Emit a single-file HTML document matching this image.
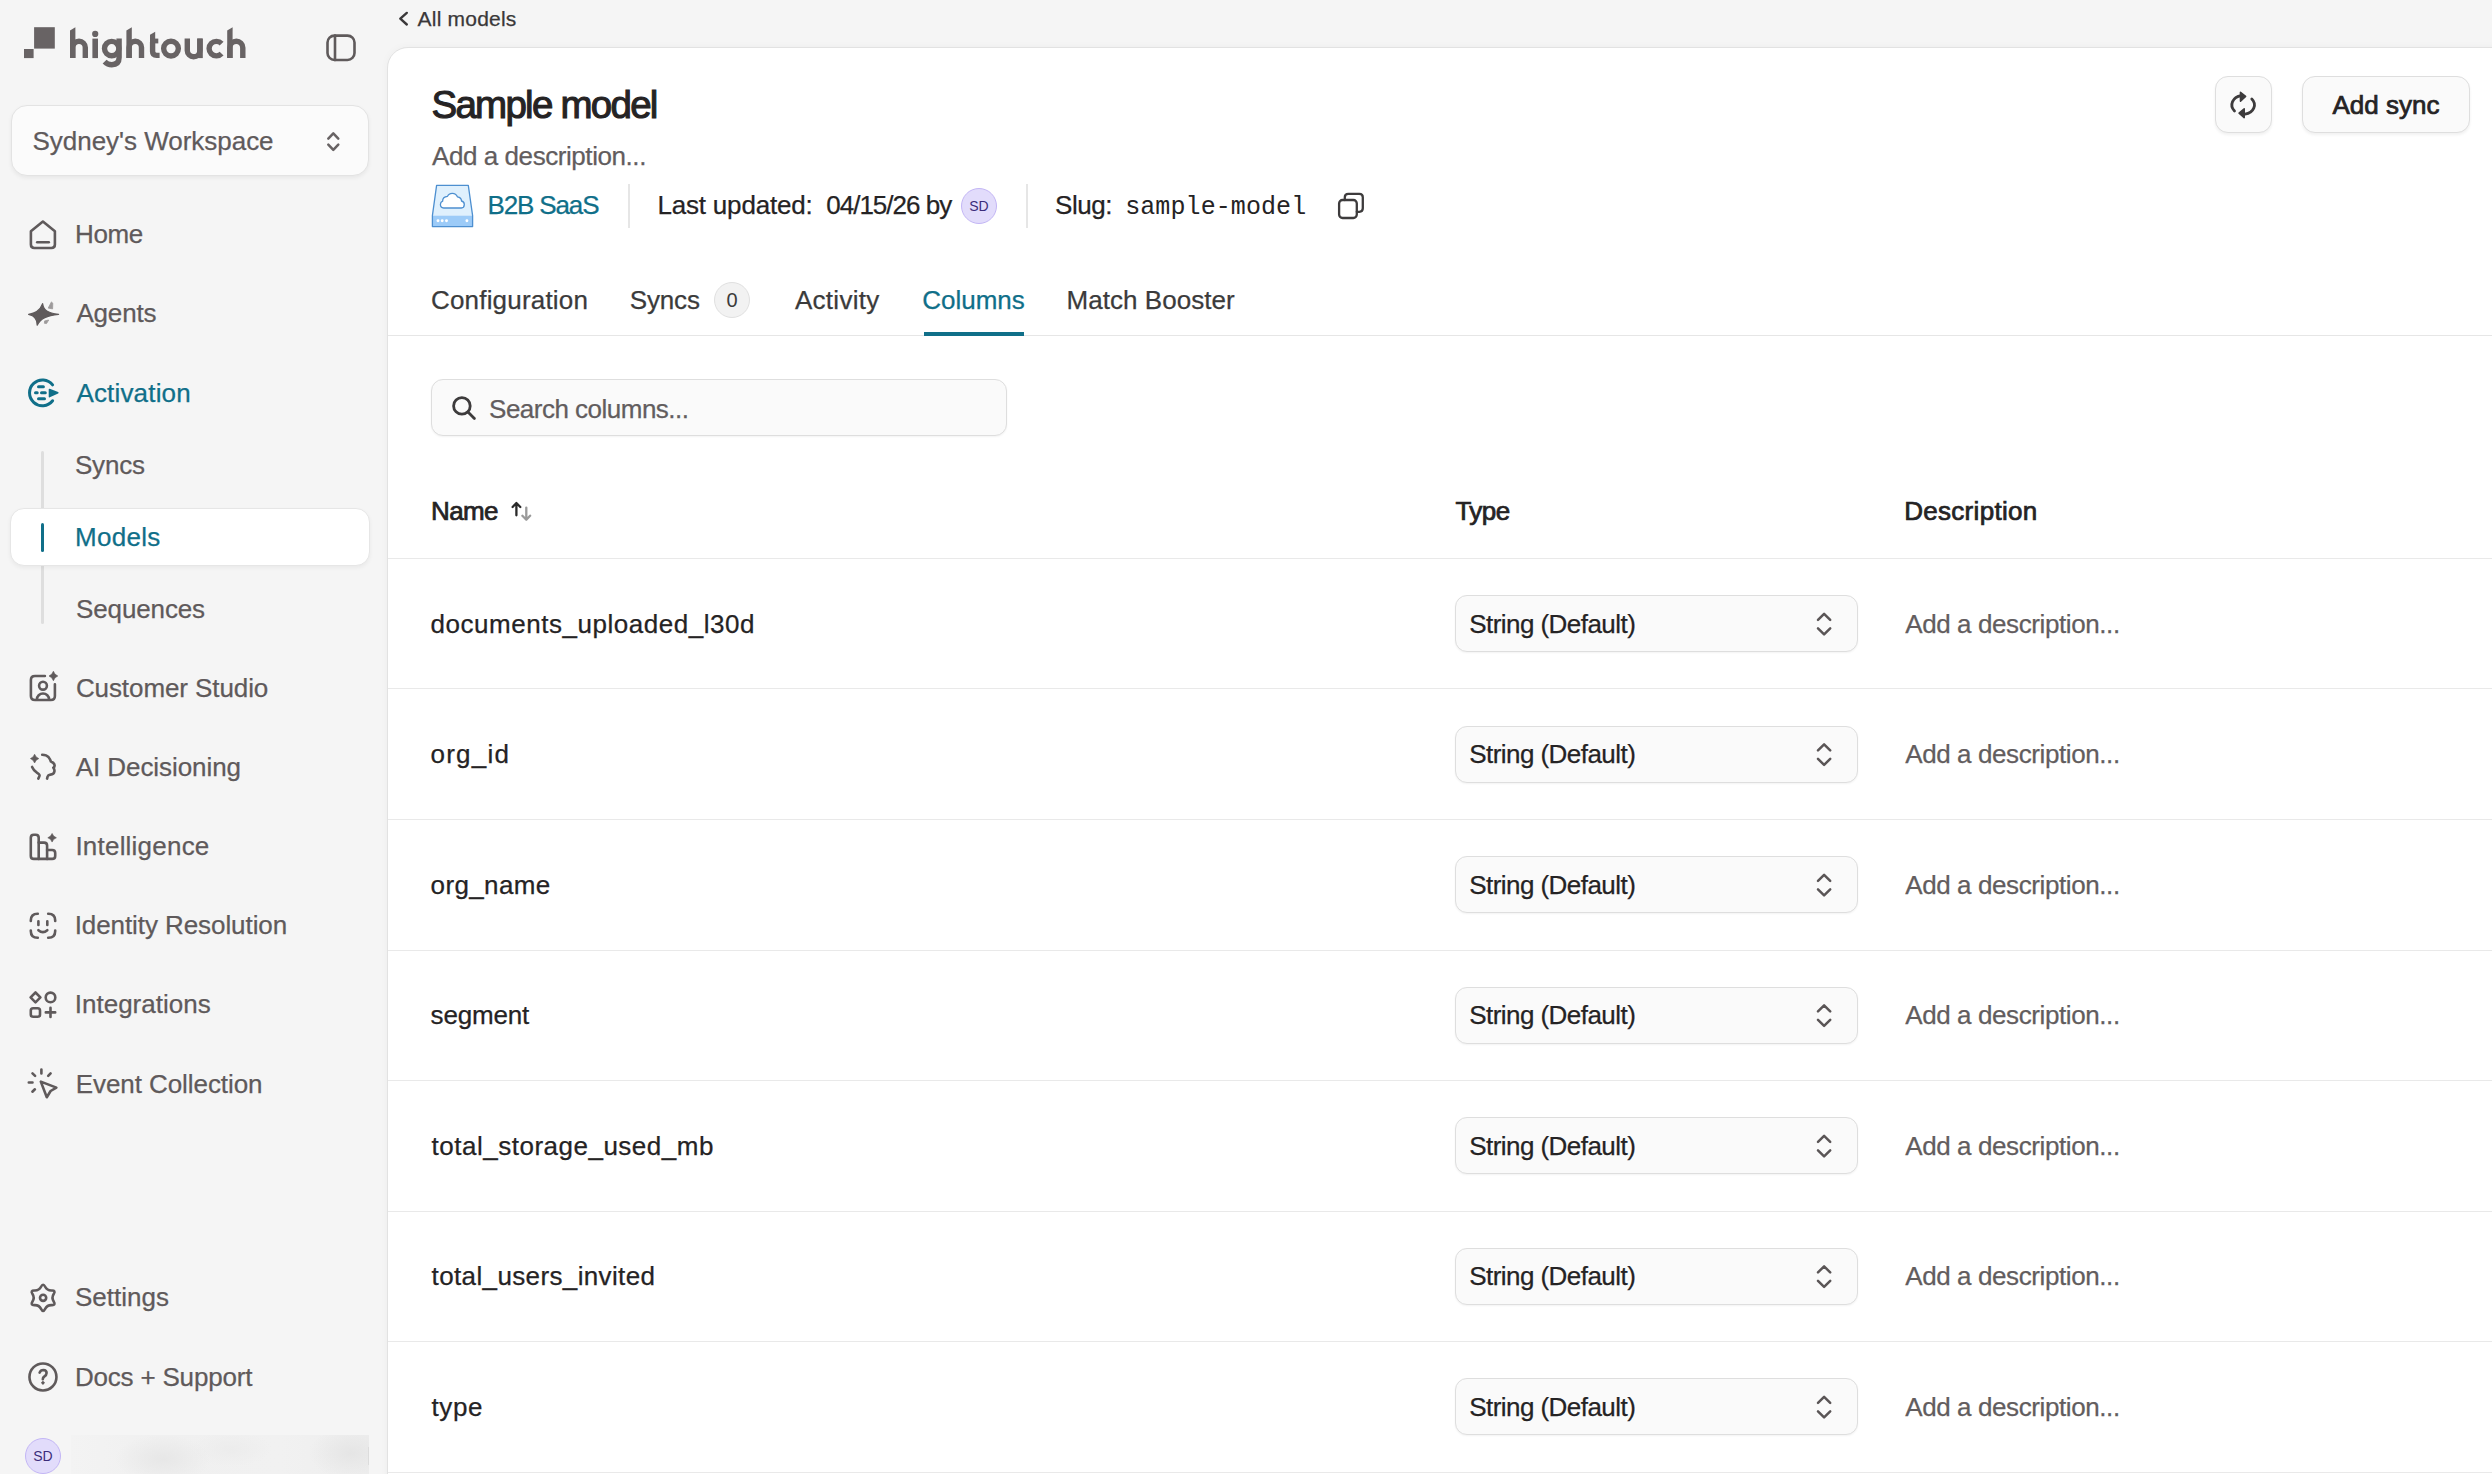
<!DOCTYPE html>
<html><head><meta charset="utf-8"><title>Sample model</title>
<style>
html,body{margin:0;padding:0;}
body{width:2492px;height:1474px;overflow:hidden;position:relative;background:#f5f5f5;font-family:"Liberation Sans",sans-serif;}
.t{position:absolute;white-space:nowrap;line-height:1;}
</style></head><body>
<div style="position:absolute;left:0;top:0;width:388px;height:1474px;background:#f5f5f5"></div>
<div style="position:absolute;left:11px;top:105px;width:358px;height:71px;background:#fbfbfb;border:1.5px solid #e3e3e3;border-radius:16px;box-sizing:border-box;box-shadow:0 2px 4px rgba(0,0,0,0.06)"></div>
<div class="t" id="ws" style="left:32.50px;top:128.19px;font-size:26px;color:#5f5a5b;font-weight:400;font-family:'Liberation Sans', sans-serif;letter-spacing:-0.024px;-webkit-text-stroke:0.25px #5f5a5b;">Sydney's Workspace</div>
<div style="position:absolute;left:41px;top:451px;width:3px;height:173px;background:#dedede;border-radius:2px"></div>
<div style="position:absolute;left:10px;top:508px;width:360px;height:58px;background:#fff;border:1.5px solid #e6e6e6;border-radius:14px;box-sizing:border-box;box-shadow:0 2px 4px rgba(0,0,0,0.05)"></div>
<div style="position:absolute;left:41px;top:523px;width:3px;height:29px;background:#106f89;border-radius:2px"></div>
<div class="t" id="n_home" style="left:75.10px;top:220.89px;font-size:26px;color:#5f5a5b;font-weight:400;font-family:'Liberation Sans', sans-serif;letter-spacing:-0.400px;-webkit-text-stroke:0.25px #5f5a5b;">Home</div>
<div class="t" id="n_agents" style="left:76.40px;top:299.69px;font-size:26px;color:#5f5a5b;font-weight:400;font-family:'Liberation Sans', sans-serif;letter-spacing:-0.160px;-webkit-text-stroke:0.25px #5f5a5b;">Agents</div>
<div class="t" id="n_act" style="left:76.40px;top:379.79px;font-size:26px;color:#106f89;font-weight:400;font-family:'Liberation Sans', sans-serif;letter-spacing:0.178px;-webkit-text-stroke:0.25px #106f89;">Activation</div>
<div class="t" id="n_syncs" style="left:74.90px;top:452.19px;font-size:26px;color:#5f5a5b;font-weight:400;font-family:'Liberation Sans', sans-serif;letter-spacing:-0.150px;-webkit-text-stroke:0.25px #5f5a5b;">Syncs</div>
<div class="t" id="n_models" style="left:75.00px;top:523.99px;font-size:26px;color:#106f89;font-weight:400;font-family:'Liberation Sans', sans-serif;letter-spacing:0.280px;-webkit-text-stroke:0.25px #106f89;">Models</div>
<div class="t" id="n_seq" style="left:76.00px;top:596.29px;font-size:26px;color:#5f5a5b;font-weight:400;font-family:'Liberation Sans', sans-serif;letter-spacing:-0.125px;-webkit-text-stroke:0.25px #5f5a5b;">Sequences</div>
<div class="t" id="n_cs" style="left:75.90px;top:675.29px;font-size:26px;color:#5f5a5b;font-weight:400;font-family:'Liberation Sans', sans-serif;letter-spacing:-0.086px;-webkit-text-stroke:0.25px #5f5a5b;">Customer Studio</div>
<div class="t" id="n_ai" style="left:75.80px;top:754.29px;font-size:26px;color:#5f5a5b;font-weight:400;font-family:'Liberation Sans', sans-serif;letter-spacing:-0.077px;-webkit-text-stroke:0.25px #5f5a5b;">AI Decisioning</div>
<div class="t" id="n_int" style="left:75.40px;top:833.29px;font-size:26px;color:#5f5a5b;font-weight:400;font-family:'Liberation Sans', sans-serif;letter-spacing:0.218px;-webkit-text-stroke:0.25px #5f5a5b;">Intelligence</div>
<div class="t" id="n_idr" style="left:74.70px;top:912.39px;font-size:26px;color:#5f5a5b;font-weight:400;font-family:'Liberation Sans', sans-serif;letter-spacing:-0.078px;-webkit-text-stroke:0.25px #5f5a5b;">Identity Resolution</div>
<div class="t" id="n_integ" style="left:74.70px;top:991.39px;font-size:26px;color:#5f5a5b;font-weight:400;font-family:'Liberation Sans', sans-serif;letter-spacing:0.018px;-webkit-text-stroke:0.25px #5f5a5b;">Integrations</div>
<div class="t" id="n_ev" style="left:75.70px;top:1071.09px;font-size:26px;color:#5f5a5b;font-weight:400;font-family:'Liberation Sans', sans-serif;letter-spacing:-0.067px;-webkit-text-stroke:0.25px #5f5a5b;">Event Collection</div>
<div class="t" id="n_set" style="left:74.90px;top:1284.19px;font-size:26px;color:#5f5a5b;font-weight:400;font-family:'Liberation Sans', sans-serif;letter-spacing:0.029px;-webkit-text-stroke:0.25px #5f5a5b;">Settings</div>
<div class="t" id="n_docs" style="left:74.90px;top:1364.39px;font-size:26px;color:#5f5a5b;font-weight:400;font-family:'Liberation Sans', sans-serif;letter-spacing:-0.185px;-webkit-text-stroke:0.25px #5f5a5b;">Docs + Support</div>
<div style="position:absolute;left:25px;top:1438px;width:36px;height:36px;border-radius:50%;background:#e2dcfb;border:1px solid #c3b6f5;box-sizing:border-box"></div>
<div style="position:absolute;left:25px;top:1438px;width:36px;height:36px;line-height:37px;text-align:center;font-size:14px;color:#3b2d7a">SD</div>
<div style="position:absolute;left:71px;top:1435px;width:298px;height:39px;background:radial-gradient(ellipse 48px 24px at 92px 24px,#e7e7e7,rgba(234,234,234,0) 100%),radial-gradient(ellipse 40px 18px at 160px 14px,#ececec,rgba(236,236,236,0) 100%),radial-gradient(ellipse 42px 26px at 280px 18px,#e5e5e5,rgba(229,229,229,0) 100%),linear-gradient(90deg,#f3f3f3,#f0f0f0 30%,#f1f1f1 70%,#eeeeee)"></div>
<div style="position:absolute;left:368px;top:1447px;width:1px;height:18px;background:#dcdcdc"></div>
<div class="t" id="bc" style="left:417.60px;top:8.32px;font-size:21px;color:#3a3839;font-weight:400;font-family:'Liberation Sans', sans-serif;letter-spacing:0.200px;-webkit-text-stroke:0.25px #3a3839;">All models</div>
<div style="position:absolute;left:387px;top:47px;width:2200px;height:1500px;background:#fff;border:1px solid #e2e2e2;border-radius:21px 0 0 0;box-sizing:border-box;box-shadow:0 0 8px rgba(0,0,0,0.035)"></div>
<div class="t" id="title" style="left:431.50px;top:85.50px;font-size:38.5px;color:#252324;font-weight:400;font-family:'Liberation Sans', sans-serif;letter-spacing:-1.745px;-webkit-text-stroke:1.08px #252324;">Sample model</div>
<div class="t" id="desc" style="left:432.00px;top:142.99px;font-size:26px;color:#625d5e;font-weight:400;font-family:'Liberation Sans', sans-serif;letter-spacing:-0.432px;-webkit-text-stroke:0.25px #625d5e;">Add a description...</div>
<div class="t" id="b2b" style="left:487.50px;top:192.49px;font-size:26px;color:#106f89;font-weight:400;font-family:'Liberation Sans', sans-serif;letter-spacing:-1.143px;-webkit-text-stroke:0.25px #106f89;">B2B SaaS</div>
<div style="position:absolute;left:628px;top:184px;width:1.5px;height:44px;background:#e6e6e6"></div>
<div class="t" id="lu" style="left:657.40px;top:192.49px;font-size:26px;color:#252324;font-weight:400;font-family:'Liberation Sans', sans-serif;letter-spacing:-0.183px;-webkit-text-stroke:0.25px #252324;">Last updated:</div>
<div class="t" id="date" style="left:826.20px;top:192.49px;font-size:26px;color:#252324;font-weight:400;font-family:'Liberation Sans', sans-serif;letter-spacing:-0.980px;-webkit-text-stroke:0.25px #252324;">04/15/26 by</div>
<div style="position:absolute;left:961px;top:188px;width:36px;height:36px;border-radius:50%;background:#e2dcfb;border:1px solid #c3b6f5;box-sizing:border-box"></div>
<div style="position:absolute;left:961px;top:188px;width:36px;height:36px;line-height:37px;text-align:center;font-size:14px;color:#3b2d7a">SD</div>
<div style="position:absolute;left:1026px;top:184px;width:1.5px;height:44px;background:#e6e6e6"></div>
<div class="t" id="slug" style="left:1055.10px;top:192.49px;font-size:26px;color:#252324;font-weight:400;font-family:'Liberation Sans', sans-serif;letter-spacing:-0.450px;-webkit-text-stroke:0.25px #252324;">Slug:</div>
<div class="t" id="slugv" style="left:1125.20px;top:195.05px;font-size:25px;color:#252324;font-weight:400;font-family:'Liberation Mono', monospace;letter-spacing:0.091px;">sample-model</div>
<div style="position:absolute;left:2215px;top:76px;width:57px;height:57px;background:#fafafa;border:1.5px solid #dedede;border-radius:13px;box-sizing:border-box;box-shadow:0 2px 3px rgba(0,0,0,0.06)"></div>
<div style="position:absolute;left:2302px;top:76px;width:168px;height:57px;background:#fafafa;border:1.5px solid #dedede;border-radius:13px;box-sizing:border-box;box-shadow:0 2px 3px rgba(0,0,0,0.06)"></div>
<div class="t" id="addsync" style="left:2332.40px;top:92.09px;font-size:26px;color:#252324;font-weight:400;font-family:'Liberation Sans', sans-serif;letter-spacing:0.029px;-webkit-text-stroke:0.73px #252324;">Add sync</div>
<div class="t" id="tab_conf" style="left:431.00px;top:286.79px;font-size:26px;color:#3b3b3b;font-weight:400;font-family:'Liberation Sans', sans-serif;letter-spacing:0.183px;-webkit-text-stroke:0.25px #3b3b3b;">Configuration</div>
<div class="t" id="tab_syncs" style="left:629.70px;top:286.79px;font-size:26px;color:#3b3b3b;font-weight:400;font-family:'Liberation Sans', sans-serif;letter-spacing:-0.150px;-webkit-text-stroke:0.25px #3b3b3b;">Syncs</div>
<div style="position:absolute;left:714px;top:282px;width:36px;height:36px;border-radius:50%;background:#f2f2f2;border:1px solid #e0e0e0;box-sizing:border-box"></div>
<div style="position:absolute;left:714px;top:282px;width:36px;height:36px;line-height:36px;text-align:center;font-size:20px;color:#3b3b3b">0</div>
<div class="t" id="tab_act" style="left:794.90px;top:286.79px;font-size:26px;color:#3b3b3b;font-weight:400;font-family:'Liberation Sans', sans-serif;letter-spacing:0.286px;-webkit-text-stroke:0.25px #3b3b3b;">Activity</div>
<div class="t" id="tab_col" style="left:922.20px;top:286.79px;font-size:26px;color:#106f89;font-weight:400;font-family:'Liberation Sans', sans-serif;letter-spacing:-0.000px;-webkit-text-stroke:0.25px #106f89;">Columns</div>
<div class="t" id="tab_mb" style="left:1066.60px;top:286.79px;font-size:26px;color:#3b3b3b;font-weight:400;font-family:'Liberation Sans', sans-serif;letter-spacing:0.033px;-webkit-text-stroke:0.25px #3b3b3b;">Match Booster</div>
<div style="position:absolute;left:388px;top:335px;width:2104px;height:1px;background:#e6e6e6"></div>
<div style="position:absolute;left:923.6px;top:332px;width:100.5px;height:4px;background:#106f89"></div>
<div style="position:absolute;left:431px;top:379px;width:576px;height:57px;background:#fafafa;border:1.5px solid #dedede;border-radius:12px;box-sizing:border-box;box-shadow:0 1px 2px rgba(0,0,0,0.05)"></div>
<div class="t" id="search" style="left:489.10px;top:395.79px;font-size:26px;color:#625d5e;font-weight:400;font-family:'Liberation Sans', sans-serif;letter-spacing:-0.512px;-webkit-text-stroke:0.25px #625d5e;">Search columns...</div>
<div class="t" id="h_name" style="left:431.10px;top:497.79px;font-size:26px;color:#252324;font-weight:400;font-family:'Liberation Sans', sans-serif;letter-spacing:-0.667px;-webkit-text-stroke:0.73px #252324;">Name</div>
<div class="t" id="h_type" style="left:1455.40px;top:498.49px;font-size:26px;color:#252324;font-weight:400;font-family:'Liberation Sans', sans-serif;letter-spacing:-0.533px;-webkit-text-stroke:0.73px #252324;">Type</div>
<div class="t" id="h_desc" style="left:1904.20px;top:498.49px;font-size:26px;color:#252324;font-weight:400;font-family:'Liberation Sans', sans-serif;letter-spacing:0.300px;-webkit-text-stroke:0.73px #252324;">Description</div>
<div style="position:absolute;left:388px;top:558px;width:2104px;height:1px;background:#e9e9e9"></div>
<div class="t" id="r0_name" style="left:430.60px;top:610.89px;font-size:26px;color:#252324;font-weight:400;font-family:'Liberation Sans', sans-serif;letter-spacing:0.527px;-webkit-text-stroke:0.25px #252324;">documents_uploaded_l30d</div>
<div style="position:absolute;left:1454.6px;top:595.40px;width:403px;height:57px;background:#fafafa;border:1.5px solid #dedede;border-radius:12px;box-sizing:border-box;box-shadow:0 1px 2px rgba(0,0,0,0.05)"></div>
<div class="t" id="r0_type" style="left:1469.20px;top:610.89px;font-size:26px;color:#252324;font-weight:400;font-family:'Liberation Sans', sans-serif;letter-spacing:-0.547px;-webkit-text-stroke:0.25px #252324;">String (Default)</div>
<div class="t" id="r0_desc" style="left:1905.20px;top:610.89px;font-size:26px;color:#625d5e;font-weight:400;font-family:'Liberation Sans', sans-serif;letter-spacing:-0.400px;-webkit-text-stroke:0.25px #625d5e;">Add a description...</div>
<div style="position:absolute;left:388px;top:688px;width:2104px;height:1px;background:#e9e9e9"></div>
<div class="t" id="r1_name" style="left:430.60px;top:741.39px;font-size:26px;color:#252324;font-weight:400;font-family:'Liberation Sans', sans-serif;letter-spacing:1.200px;-webkit-text-stroke:0.25px #252324;">org_id</div>
<div style="position:absolute;left:1454.6px;top:725.90px;width:403px;height:57px;background:#fafafa;border:1.5px solid #dedede;border-radius:12px;box-sizing:border-box;box-shadow:0 1px 2px rgba(0,0,0,0.05)"></div>
<div class="t" id="r1_type" style="left:1469.20px;top:741.39px;font-size:26px;color:#252324;font-weight:400;font-family:'Liberation Sans', sans-serif;letter-spacing:-0.547px;-webkit-text-stroke:0.25px #252324;">String (Default)</div>
<div class="t" id="r1_desc" style="left:1905.20px;top:741.39px;font-size:26px;color:#625d5e;font-weight:400;font-family:'Liberation Sans', sans-serif;letter-spacing:-0.400px;-webkit-text-stroke:0.25px #625d5e;">Add a description...</div>
<div style="position:absolute;left:388px;top:819px;width:2104px;height:1px;background:#e9e9e9"></div>
<div class="t" id="r2_name" style="left:430.60px;top:871.89px;font-size:26px;color:#252324;font-weight:400;font-family:'Liberation Sans', sans-serif;letter-spacing:0.371px;-webkit-text-stroke:0.25px #252324;">org_name</div>
<div style="position:absolute;left:1454.6px;top:856.40px;width:403px;height:57px;background:#fafafa;border:1.5px solid #dedede;border-radius:12px;box-sizing:border-box;box-shadow:0 1px 2px rgba(0,0,0,0.05)"></div>
<div class="t" id="r2_type" style="left:1469.20px;top:871.89px;font-size:26px;color:#252324;font-weight:400;font-family:'Liberation Sans', sans-serif;letter-spacing:-0.547px;-webkit-text-stroke:0.25px #252324;">String (Default)</div>
<div class="t" id="r2_desc" style="left:1905.20px;top:871.89px;font-size:26px;color:#625d5e;font-weight:400;font-family:'Liberation Sans', sans-serif;letter-spacing:-0.400px;-webkit-text-stroke:0.25px #625d5e;">Add a description...</div>
<div style="position:absolute;left:388px;top:950px;width:2104px;height:1px;background:#e9e9e9"></div>
<div class="t" id="r3_name" style="left:430.60px;top:1002.39px;font-size:26px;color:#252324;font-weight:400;font-family:'Liberation Sans', sans-serif;letter-spacing:-0.167px;-webkit-text-stroke:0.25px #252324;">segment</div>
<div style="position:absolute;left:1454.6px;top:986.90px;width:403px;height:57px;background:#fafafa;border:1.5px solid #dedede;border-radius:12px;box-sizing:border-box;box-shadow:0 1px 2px rgba(0,0,0,0.05)"></div>
<div class="t" id="r3_type" style="left:1469.20px;top:1002.39px;font-size:26px;color:#252324;font-weight:400;font-family:'Liberation Sans', sans-serif;letter-spacing:-0.547px;-webkit-text-stroke:0.25px #252324;">String (Default)</div>
<div class="t" id="r3_desc" style="left:1905.20px;top:1002.39px;font-size:26px;color:#625d5e;font-weight:400;font-family:'Liberation Sans', sans-serif;letter-spacing:-0.400px;-webkit-text-stroke:0.25px #625d5e;">Add a description...</div>
<div style="position:absolute;left:388px;top:1080px;width:2104px;height:1px;background:#e9e9e9"></div>
<div class="t" id="r4_name" style="left:431.60px;top:1132.89px;font-size:26px;color:#252324;font-weight:400;font-family:'Liberation Sans', sans-serif;letter-spacing:0.500px;-webkit-text-stroke:0.25px #252324;">total_storage_used_mb</div>
<div style="position:absolute;left:1454.6px;top:1117.40px;width:403px;height:57px;background:#fafafa;border:1.5px solid #dedede;border-radius:12px;box-sizing:border-box;box-shadow:0 1px 2px rgba(0,0,0,0.05)"></div>
<div class="t" id="r4_type" style="left:1469.20px;top:1132.89px;font-size:26px;color:#252324;font-weight:400;font-family:'Liberation Sans', sans-serif;letter-spacing:-0.547px;-webkit-text-stroke:0.25px #252324;">String (Default)</div>
<div class="t" id="r4_desc" style="left:1905.20px;top:1132.89px;font-size:26px;color:#625d5e;font-weight:400;font-family:'Liberation Sans', sans-serif;letter-spacing:-0.400px;-webkit-text-stroke:0.25px #625d5e;">Add a description...</div>
<div style="position:absolute;left:388px;top:1211px;width:2104px;height:1px;background:#e9e9e9"></div>
<div class="t" id="r5_name" style="left:431.60px;top:1263.39px;font-size:26px;color:#252324;font-weight:400;font-family:'Liberation Sans', sans-serif;letter-spacing:0.367px;-webkit-text-stroke:0.25px #252324;">total_users_invited</div>
<div style="position:absolute;left:1454.6px;top:1247.90px;width:403px;height:57px;background:#fafafa;border:1.5px solid #dedede;border-radius:12px;box-sizing:border-box;box-shadow:0 1px 2px rgba(0,0,0,0.05)"></div>
<div class="t" id="r5_type" style="left:1469.20px;top:1263.39px;font-size:26px;color:#252324;font-weight:400;font-family:'Liberation Sans', sans-serif;letter-spacing:-0.547px;-webkit-text-stroke:0.25px #252324;">String (Default)</div>
<div class="t" id="r5_desc" style="left:1905.20px;top:1263.39px;font-size:26px;color:#625d5e;font-weight:400;font-family:'Liberation Sans', sans-serif;letter-spacing:-0.400px;-webkit-text-stroke:0.25px #625d5e;">Add a description...</div>
<div style="position:absolute;left:388px;top:1341px;width:2104px;height:1px;background:#e9e9e9"></div>
<div class="t" id="r6_name" style="left:431.60px;top:1393.89px;font-size:26px;color:#252324;font-weight:400;font-family:'Liberation Sans', sans-serif;letter-spacing:0.533px;-webkit-text-stroke:0.25px #252324;">type</div>
<div style="position:absolute;left:1454.6px;top:1378.40px;width:403px;height:57px;background:#fafafa;border:1.5px solid #dedede;border-radius:12px;box-sizing:border-box;box-shadow:0 1px 2px rgba(0,0,0,0.05)"></div>
<div class="t" id="r6_type" style="left:1469.20px;top:1393.89px;font-size:26px;color:#252324;font-weight:400;font-family:'Liberation Sans', sans-serif;letter-spacing:-0.547px;-webkit-text-stroke:0.25px #252324;">String (Default)</div>
<div class="t" id="r6_desc" style="left:1905.20px;top:1393.89px;font-size:26px;color:#625d5e;font-weight:400;font-family:'Liberation Sans', sans-serif;letter-spacing:-0.400px;-webkit-text-stroke:0.25px #625d5e;">Add a description...</div>
<div style="position:absolute;left:388px;top:1472px;width:2104px;height:1px;background:#e9e9e9"></div>
<svg style="position:absolute;left:0;top:0;z-index:5" width="2492" height="1474" viewBox="0 0 2492 1474"><rect x="24" y="49" width="9.6" height="9.1" fill="#686364"/><rect x="34.1" y="27.2" width="20.7" height="21.4" fill="#686364"/><path d="M70 30.4 L75.4 27.3 L75.4 58.1 L70 58.1 Z" fill="#686364"/><path d="M72.70 58.1 L72.70 47.60 A6.30 6.30 0 0 1 85.30 47.60 L85.30 58.1" fill="none" stroke="#686364" stroke-width="5.4"/><rect x="92.4" y="38.6" width="5.6" height="19.5" fill="#686364"/><circle cx="95.2" cy="33.9" r="3.1" fill="#686364"/><circle cx="111.7" cy="48.6" r="7.2" fill="none" stroke="#686364" stroke-width="5.4" stroke-width="5.2"/><path d="M119.1 38.6 L119.1 57.6 Q119.1 64.7 111.8 64.7 Q107.6 64.7 104.6 61.6" fill="none" stroke="#686364" stroke-width="5.4" stroke-width="5.4"/><path d="M126.4 30.4 L131.8 27.3 L131.8 58.1 L126.4 58.1 Z" fill="#686364"/><path d="M129.10 58.1 L129.10 47.50 A6.20 6.20 0 0 1 141.50 47.50 L141.50 58.1" fill="none" stroke="#686364" stroke-width="5.4"/><path d="M150 34.7 L155.2 31.8 L155.2 43 L150 43 Z" fill="#686364"/><rect x="150" y="38.6" width="8.3" height="4.8" fill="#686364"/><path d="M152.6 42 L152.6 51.6 Q152.6 55.4 156.6 55.4 L159.6 55.4" fill="none" stroke="#686364" stroke-width="5.4" stroke-width="5.4"/><circle cx="171" cy="48.6" r="7.35" fill="none" stroke="#686364" stroke-width="5.4" stroke-width="5.3"/><path d="M187.3 38.6 L187.3 50.5 A6.25 6.25 0 0 0 199.9 50.5 L199.9 38.6" fill="none" stroke="#686364" stroke-width="5.4"/><rect x="197.2" y="38.6" width="5.6" height="19.5" fill="#686364"/><path d="M221.6 43.6 A7.25 7.25 0 1 0 221.6 53.6" fill="none" stroke="#686364" stroke-width="5.4" stroke-width="5.3"/><path d="M227.2 30.4 L232.6 27.3 L232.6 58.1 L227.2 58.1 Z" fill="#686364"/><path d="M229.90 58.1 L229.90 47.75 A6.45 6.45 0 0 1 242.80 47.75 L242.80 58.1" fill="none" stroke="#686364" stroke-width="5.4"/><rect x="327.5" y="35.6" width="27" height="24.4" rx="7" fill="none" stroke="#5f5a5b" stroke-width="2.6" stroke-linecap="round" stroke-linejoin="round" stroke-width="2.7"/><path d="M335 35.6 L335 60" fill="none" stroke="#5f5a5b" stroke-width="2.6" stroke-linecap="round" stroke-linejoin="round" stroke-width="2.7"/><path d="M328.3 138.6 L333.3 133.29999999999998 L338.3 138.6 M328.3 144.6 L333.3 149.9 L338.3 144.6" fill="none" stroke="#686364" stroke-width="2.5" stroke-linecap="round" stroke-linejoin="round"/><path d="M30.9 231.2 L42.9 221.6 L54.9 231.2 L54.9 244.6 Q54.9 248 51.5 248 L34.3 248 Q30.9 248 30.9 244.6 Z" fill="none" stroke="#5f5a5b" stroke-width="2.6" stroke-linecap="round" stroke-linejoin="round"/><path d="M37.2 242.3 L48.8 242.3" fill="none" stroke="#5f5a5b" stroke-width="2.6" stroke-linecap="round" stroke-linejoin="round"/><path d="M28.6 314.4 C34.5 313.4 39.6 311.6 42.6 303.6 C43.6 310.4 47.4 313 58.6 314.4 C47 315.6 40.6 318.2 37.2 325.2 C37.4 318.4 34.5 315.6 28.6 314.4 Z" fill="#5f5a5b" stroke="#5f5a5b" stroke-width="1.2" stroke-linejoin="round"/><path d="M51.4 301.9 L52.8 303.2 L52.6 308.9 L48.2 308.1 Z" fill="#9d9a9b" stroke="#9d9a9b" stroke-width="0.8" stroke-linejoin="round"/><path d="M48.7 320 L46.5 323.6 L44.4 323.3 L44.6 320.9 Z" fill="#9d9a9b" stroke="#9d9a9b" stroke-width="0.8" stroke-linejoin="round"/><path d="M52.6 384.86 A12.9 12.9 0 1 0 52.6 400.74" fill="none" stroke="#106f89" stroke-width="3" stroke-linecap="round" stroke-linejoin="round" stroke-width="3.1"/><path d="M38.5 386.8 L43.4 386.8 M35.5 392.8 L37.2 392.8 M41.5 392.8 L45.3 392.8 M38.5 398.8 L44.5 398.8" fill="none" stroke="#106f89" stroke-width="3" stroke-linecap="round" stroke-linejoin="round" stroke-width="2.4"/><path d="M49.5 389.6 L57.8 392.8 L49.5 396.6 Z" fill="#106f89" stroke="#106f89" stroke-width="1.6" stroke-linejoin="round"/><path d="M44.9 676 L35 676 Q30.9 676 30.9 680 L30.9 696 Q30.9 700 35 700 L50.9 700 Q54.9 700 54.9 696 L54.9 684.3" fill="none" stroke="#5f5a5b" stroke-width="2.6" stroke-linecap="round" stroke-linejoin="round"/><circle cx="43" cy="685.7" r="3.9" fill="none" stroke="#5f5a5b" stroke-width="2.6" stroke-linecap="round" stroke-linejoin="round"/><path d="M36.9 699.6 A6.1 6.1 0 0 1 49.1 699.6" fill="none" stroke="#5f5a5b" stroke-width="2.6" stroke-linecap="round" stroke-linejoin="round"/><path d="M53.4 671.2 Q54.5 674.8 57.8 676 Q54.5 677.2 53.4 680.8 Q52.3 677.2 49.0 676 Q52.3 674.8 53.4 671.2 Z" fill="#5f5a5b" stroke="#5f5a5b" stroke-width="0.6" stroke-linejoin="round"/><path d="M42.2 754.7 Q46.5 754.8 48.6 757.2 Q50.4 759.4 50.9 761.6 Q54.4 762.8 54.6 765.4 Q54.7 767 53.3 767.6 Q54.8 769.5 54.4 771.5 Q53.9 774.4 50.5 774.6 Q48 775 47.6 776.5 L47.1 778.6" fill="none" stroke="#5f5a5b" stroke-width="2.6" stroke-linecap="round" stroke-linejoin="round"/><path d="M32.1 766.9 Q33.6 770.6 37.2 772.8 Q40.2 774.5 39.4 776.3 L38.3 778.6" fill="none" stroke="#5f5a5b" stroke-width="2.6" stroke-linecap="round" stroke-linejoin="round"/><path d="M34.6 754.2 Q35.65 757.5 38.800000000000004 758.6 Q35.65 759.7 34.6 763.0 Q33.550000000000004 759.7 30.400000000000002 758.6 Q33.550000000000004 757.5 34.6 754.2 Z" fill="#5f5a5b" stroke="#5f5a5b" stroke-width="0.6" stroke-linejoin="round"/><path d="M30.8 855.9 L30.8 837.8 Q30.8 834.8 33.8 834.8 L35.7 834.8 Q38.7 834.8 38.7 837.8 L38.7 858.9 L33.8 858.9 Q30.8 858.9 30.8 855.9 Z" fill="none" stroke="#5f5a5b" stroke-width="2.6" stroke-linecap="round" stroke-linejoin="round"/><path d="M38.7 842.6 L44.1 842.6 Q47.1 842.6 47.1 845.6 L47.1 858.9 L38.7 858.9" fill="none" stroke="#5f5a5b" stroke-width="2.6" stroke-linecap="round" stroke-linejoin="round"/><path d="M47.1 850 L52.2 850 Q55.2 850 55.2 853 L55.2 855.9 Q55.2 858.9 52.2 858.9 L47.1 858.9" fill="none" stroke="#5f5a5b" stroke-width="2.6" stroke-linecap="round" stroke-linejoin="round"/><path d="M52.1 833.45 Q53.175000000000004 836.675 56.4 837.75 Q53.175000000000004 838.825 52.1 842.05 Q51.025 838.825 47.800000000000004 837.75 Q51.025 836.675 52.1 833.45 Z" fill="#5f5a5b" stroke="#5f5a5b" stroke-width="0.6" stroke-linejoin="round"/><path d="M30.8 921 L30.8 920.5 Q30.8 913.7 37.6 913.7 L37.8 913.7 M48.2 913.7 L48.4 913.7 Q55.2 913.7 55.2 920.5 L55.2 921 M55.2 930.5 L55.2 931 Q55.2 937.8 48.4 937.8 L48.2 937.8 M37.8 937.8 L37.6 937.8 Q30.8 937.8 30.8 931 L30.8 930.5" fill="none" stroke="#5f5a5b" stroke-width="2.6" stroke-linecap="round" stroke-linejoin="round"/><path d="M38.4 921.2 L38.4 924.9 M47.3 921.2 L47.3 924.9 M38.4 930.2 Q42.9 934 47.3 930.2" fill="none" stroke="#5f5a5b" stroke-width="2.6" stroke-linecap="round" stroke-linejoin="round"/><path d="M35.5 992.5 L40.4 997.4 L35.5 1002.3 L30.6 997.4 Z" fill="none" stroke="#5f5a5b" stroke-width="2.6" stroke-linecap="round" stroke-linejoin="round"/><circle cx="50.5" cy="997.4" r="4.8" fill="none" stroke="#5f5a5b" stroke-width="2.6" stroke-linecap="round" stroke-linejoin="round"/><rect x="30.8" y="1008.2" width="9.2" height="8.6" rx="2.3" fill="none" stroke="#5f5a5b" stroke-width="2.6" stroke-linecap="round" stroke-linejoin="round"/><path d="M50.5 1007.8 L50.5 1017 M45.8 1012.4 L55.2 1012.4" fill="none" stroke="#5f5a5b" stroke-width="2.6" stroke-linecap="round" stroke-linejoin="round"/><path d="M40.8 1081.6 L56.4 1087.6 L50.6 1091 L46.8 1097.2 Z" fill="none" stroke="#5f5a5b" stroke-width="2.6" stroke-linecap="round" stroke-linejoin="round" stroke-width="2.8"/><path d="M41.4 1069.6 L41.4 1073.4 M32.5 1073.4 L35.1 1075.9 M48.2 1075.9 L50.6 1073.4 M28.8 1082.5 L32.5 1082.5 M32.4 1091.7 L34.9 1089.3" fill="none" stroke="#5f5a5b" stroke-width="2.6" stroke-linecap="round" stroke-linejoin="round"/><path d="M41.05 1286.75 Q43.10 1282.80 45.15 1286.75 Q47.20 1290.70 51.65 1290.50 Q56.09 1290.30 53.70 1294.05 Q51.30 1297.80 53.70 1301.55 Q56.09 1305.30 51.65 1305.10 Q47.20 1304.90 45.15 1308.85 Q43.10 1312.80 41.05 1308.85 Q39.00 1304.90 34.55 1305.10 Q30.11 1305.30 32.50 1301.55 Q34.90 1297.80 32.50 1294.05 Q30.11 1290.30 34.55 1290.50 Q39.00 1290.70 41.05 1286.75 Z" fill="none" stroke="#5f5a5b" stroke-width="2.6" stroke-linecap="round" stroke-linejoin="round" stroke-width="2.7"/><circle cx="43.1" cy="1297.8" r="3.1" fill="none" stroke="#5f5a5b" stroke-width="2.6" stroke-linecap="round" stroke-linejoin="round" stroke-width="2.6"/><circle cx="42.95" cy="1376.95" r="13.5" fill="none" stroke="#5f5a5b" stroke-width="2.6" stroke-linecap="round" stroke-linejoin="round" stroke-width="2.8"/><path d="M39.6 1372.6 Q40.6 1370 43.4 1370 Q46.6 1370.2 46.6 1373 Q46.6 1375 44.2 1376.6 Q42.8 1377.6 42.8 1379.2" fill="none" stroke="#5f5a5b" stroke-width="2.6" stroke-linecap="round" stroke-linejoin="round" stroke-width="2.7"/><rect x="41.5" y="1381.4" width="2.9" height="2.9" fill="#5f5a5b" transform="rotate(45 42.95 1382.85)"/><path d="M406.8 12.9 L400.3 18.7 L406.8 24.5" fill="none" stroke="#3a3839" stroke-width="2.4" stroke-linecap="round" stroke-linejoin="round"/><path d="M436.6 185.3 L468.3 185.3 L472.6 215.6 L432.4 215.6 Z" fill="#dff0fd"/><rect x="432.4" y="215.6" width="40.2" height="11" fill="#9ccbf8"/><path d="M436.6 185.3 L468.3 185.3 L472.6 215.6 L472.6 226.6 L432.4 226.6 L432.4 215.6 Z" fill="none" stroke="#4d8fd0" stroke-width="1.3" stroke-linejoin="round"/><path d="M443.6 208 L461.3 208 Q464.3 207.8 464.3 204.5 Q464.3 201.6 461.5 201 Q461.5 197.5 457.4 196.8 Q456 193.3 452.3 193.3 Q448.6 193.3 447.5 196.4 Q442.6 196.8 442.6 201.2 Q440.4 202 440.4 204.6 Q440.5 208 443.6 208 Z" fill="#fff" stroke="#4d8fd0" stroke-width="1.3" stroke-linejoin="round"/><circle cx="438.0" cy="220.7" r="1.45" fill="#fff"/><circle cx="442.2" cy="220.7" r="1.45" fill="#fff"/><circle cx="446.5" cy="220.7" r="1.45" fill="#fff"/><circle cx="466.9" cy="220.7" r="1.45" fill="#fff"/><rect x="1339.1" y="200" width="17.7" height="18" rx="3.4" fill="none" stroke="#3d3b3c" stroke-width="2.3" stroke-linecap="round" stroke-linejoin="round"/><path d="M1344.8 200 L1344.8 197.3 Q1344.8 193.8 1348.3 193.8 L1359.3 193.8 Q1362.8 193.8 1362.8 197.3 L1362.8 208.3 Q1362.8 211.8 1359.3 211.8 L1356.8 211.8" fill="none" stroke="#3d3b3c" stroke-width="2.3" stroke-linecap="round" stroke-linejoin="round"/><path d="M2234.5 110.9 A11.25 9.4 0 0 1 2241.2 95.6" fill="none" stroke="#3d3b3c" stroke-width="2.8" stroke-linecap="round" stroke-linejoin="round"/><path d="M2240.5 92.3 L2245.6 96.3 L2240.5 101.1 Z" fill="#3d3b3c" stroke="#3d3b3c" stroke-width="1.6" stroke-linejoin="round"/><path d="M2251.8 98.9 A11.25 9.4 0 0 1 2245.1 114.2" fill="none" stroke="#3d3b3c" stroke-width="2.8" stroke-linecap="round" stroke-linejoin="round"/><path d="M2244.2 108.8 L2239.1 113.2 L2244.2 117.6 Z" fill="#3d3b3c" stroke="#3d3b3c" stroke-width="1.6" stroke-linejoin="round"/><circle cx="461.9" cy="405.9" r="8.3" fill="none" stroke="#3d3b3c" stroke-width="2.8"/><path d="M468.2 412.2 L474.4 418.4" fill="none" stroke="#3d3b3c" stroke-width="2.8" stroke-linecap="round"/><path d="M516.4 515.3 L516.4 503.2 M512.6 507 L516.4 503 L520.3 507" fill="none" stroke="#2a2a2a" stroke-width="2.3" stroke-linecap="round" stroke-linejoin="round"/><path d="M526.3 507.6 L526.3 519.7 M522.4 515.7 L526.3 519.7 L530.1 515.7" fill="none" stroke="#9a9a9a" stroke-width="2.3" stroke-linecap="round" stroke-linejoin="round"/><path d="M1818.0 619.85 L1824.1 613.8000000000001 L1830.1999999999998 619.85 M1818.0 628.35 L1824.1 634.4 L1830.1999999999998 628.35" fill="none" stroke="#5a5556" stroke-width="2.5" stroke-linecap="round" stroke-linejoin="round"/><path d="M1818.0 750.35 L1824.1 744.3000000000001 L1830.1999999999998 750.35 M1818.0 758.85 L1824.1 764.9 L1830.1999999999998 758.85" fill="none" stroke="#5a5556" stroke-width="2.5" stroke-linecap="round" stroke-linejoin="round"/><path d="M1818.0 880.85 L1824.1 874.8000000000001 L1830.1999999999998 880.85 M1818.0 889.35 L1824.1 895.4 L1830.1999999999998 889.35" fill="none" stroke="#5a5556" stroke-width="2.5" stroke-linecap="round" stroke-linejoin="round"/><path d="M1818.0 1011.35 L1824.1 1005.3000000000001 L1830.1999999999998 1011.35 M1818.0 1019.85 L1824.1 1025.9 L1830.1999999999998 1019.85" fill="none" stroke="#5a5556" stroke-width="2.5" stroke-linecap="round" stroke-linejoin="round"/><path d="M1818.0 1141.85 L1824.1 1135.8 L1830.1999999999998 1141.85 M1818.0 1150.35 L1824.1 1156.3999999999999 L1830.1999999999998 1150.35" fill="none" stroke="#5a5556" stroke-width="2.5" stroke-linecap="round" stroke-linejoin="round"/><path d="M1818.0 1272.35 L1824.1 1266.3 L1830.1999999999998 1272.35 M1818.0 1280.85 L1824.1 1286.8999999999999 L1830.1999999999998 1280.85" fill="none" stroke="#5a5556" stroke-width="2.5" stroke-linecap="round" stroke-linejoin="round"/><path d="M1818.0 1402.85 L1824.1 1396.8 L1830.1999999999998 1402.85 M1818.0 1411.35 L1824.1 1417.3999999999999 L1830.1999999999998 1411.35" fill="none" stroke="#5a5556" stroke-width="2.5" stroke-linecap="round" stroke-linejoin="round"/></svg>
</body></html>
